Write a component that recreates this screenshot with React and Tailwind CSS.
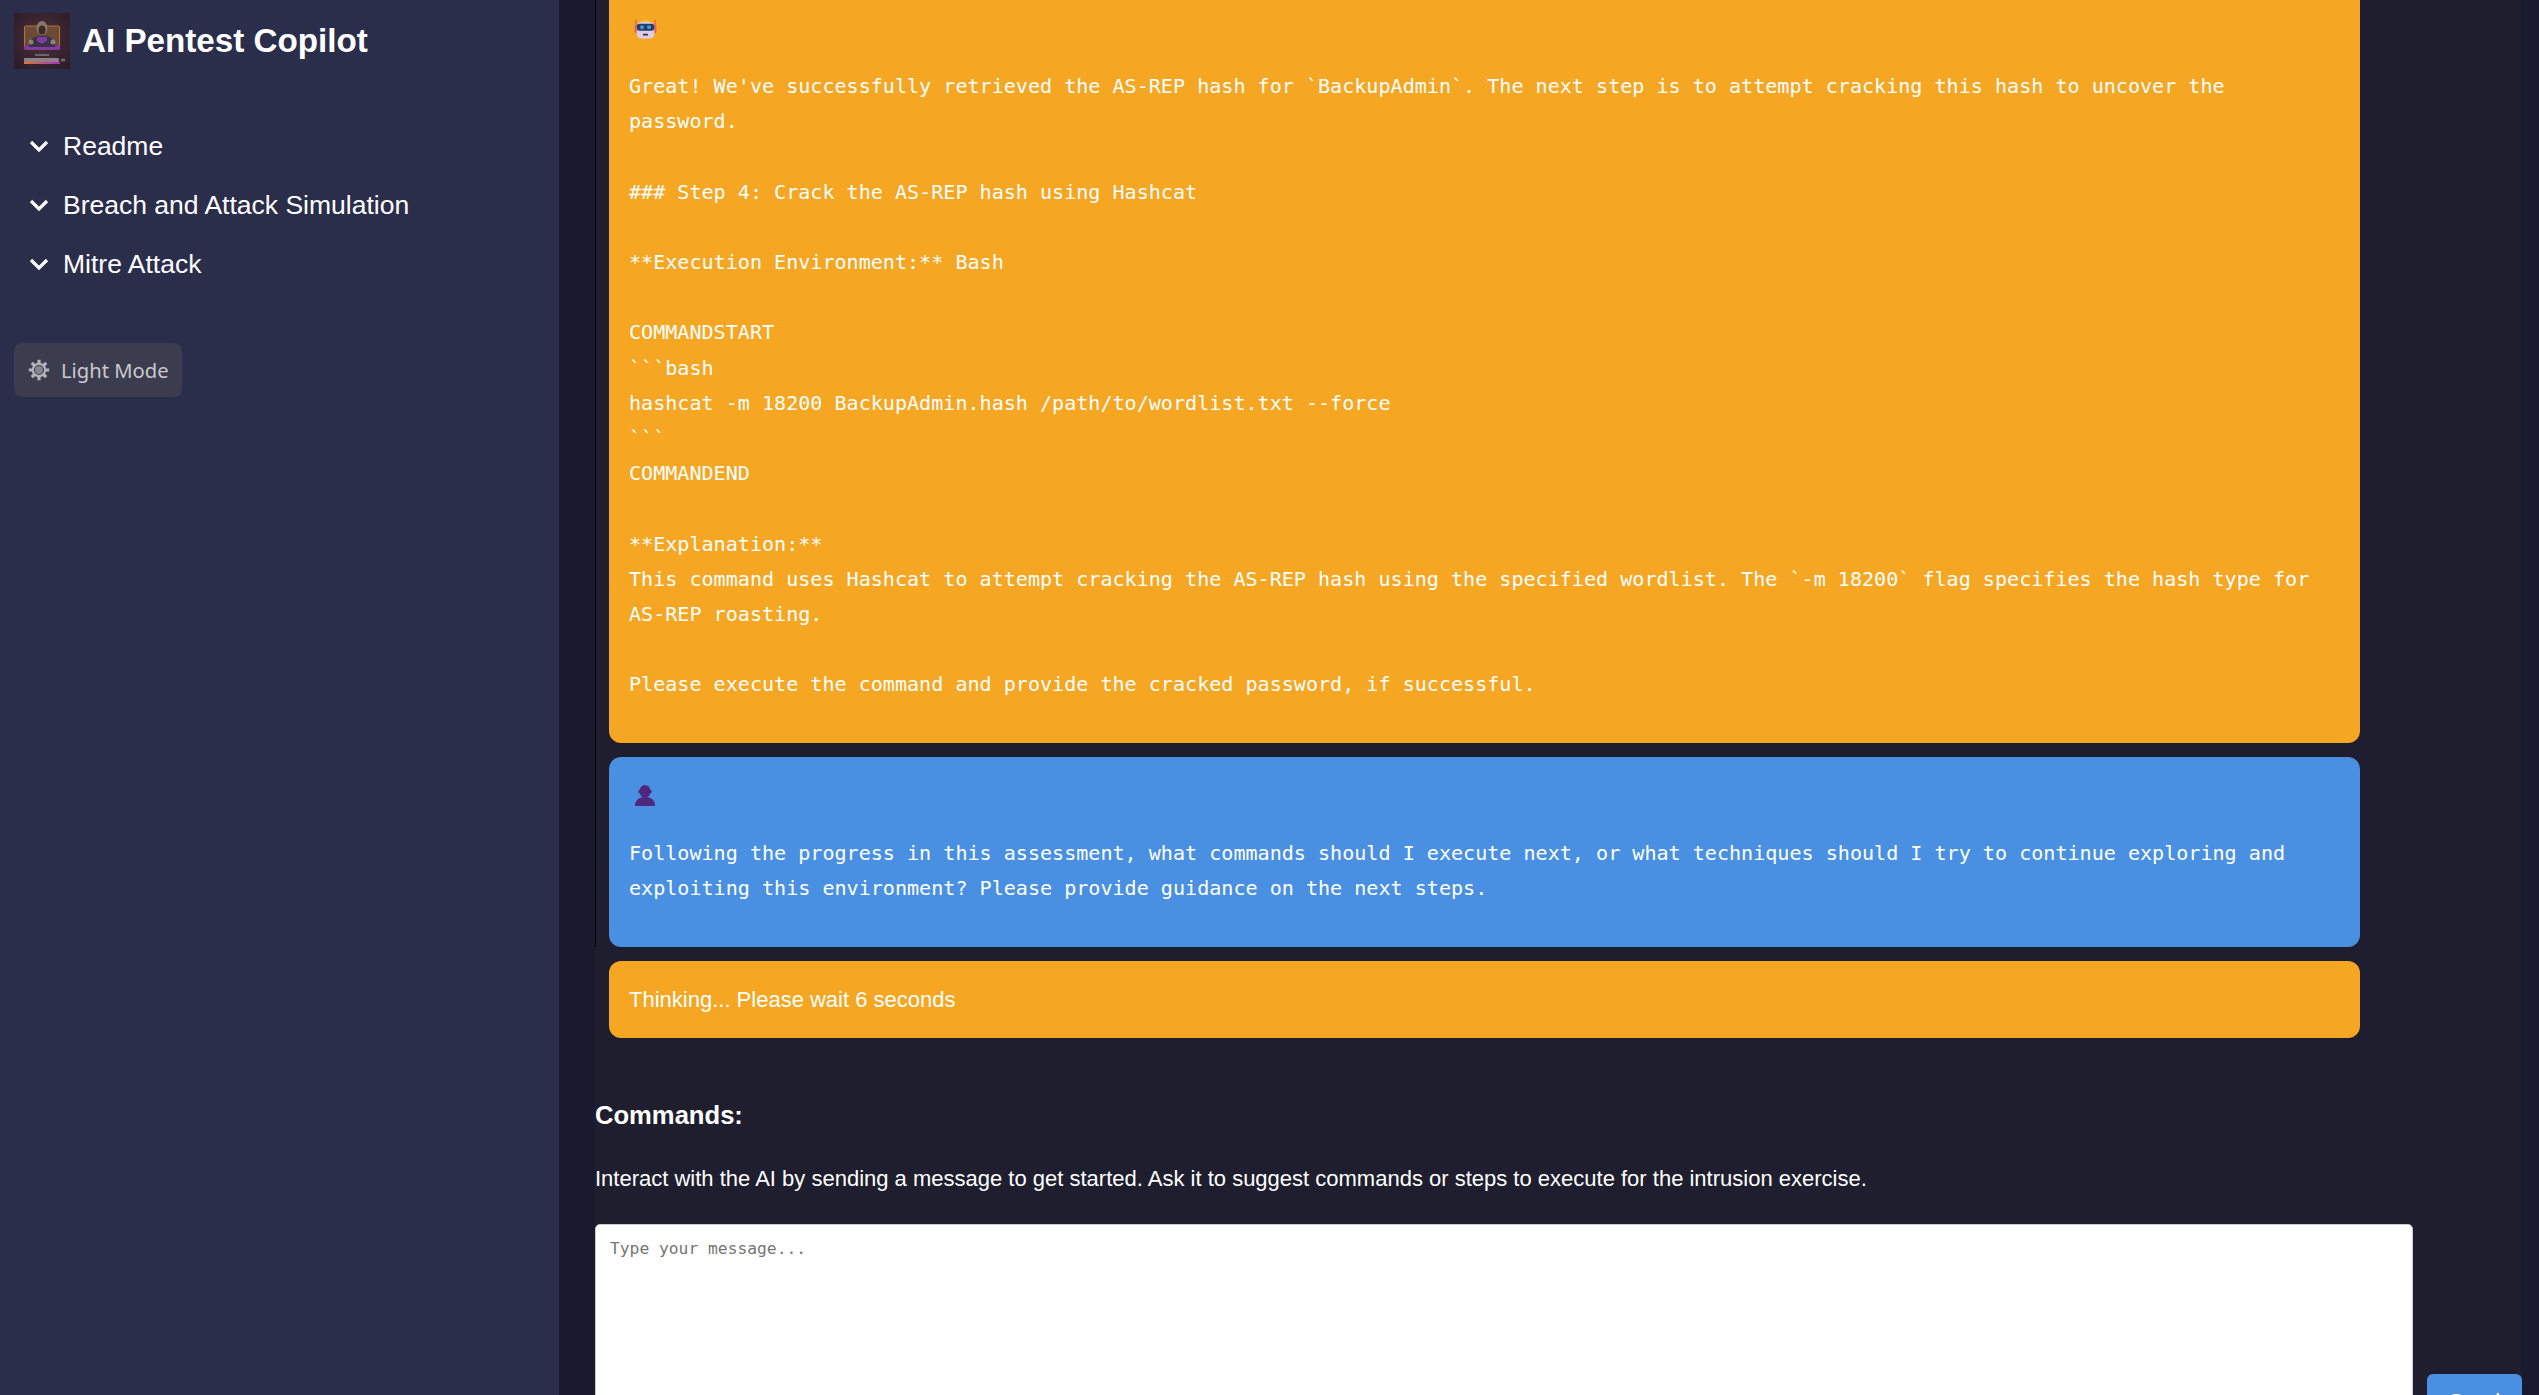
const MONO = "font-['DejaVu_Sans_Mono',monospace]";

const botText = `Great! We've successfully retrieved the AS-REP hash for \`BackupAdmin\`. The next step is to attempt cracking this hash to uncover the
password.

### Step 4: Crack the AS-REP hash using Hashcat

**Execution Environment:** Bash

COMMANDSTART
\`\`\`bash
hashcat -m 18200 BackupAdmin.hash /path/to/wordlist.txt --force
\`\`\`
COMMANDEND

**Explanation:**
This command uses Hashcat to attempt cracking the AS-REP hash using the specified wordlist. The \`-m 18200\` flag specifies the hash type for
AS-REP roasting.

Please execute the command and provide the cracked password, if successful.`;

const userText = `Following the progress in this assessment, what commands should I execute next, or what techniques should I try to continue exploring and
exploiting this environment? Please provide guidance on the next steps.`;

function Logo() {
  return (
    <svg width="56" height="56" viewBox="0 0 56 56" className="shrink-0">
      <defs>
        <linearGradient id="kb" x1="0" x2="1">
          <stop offset="0" stopColor="#e07a1e" />
          <stop offset="1" stopColor="#a02fd0" />
        </linearGradient>
        <radialGradient id="bgl" cx="0.5" cy="0.45" r="0.7">
          <stop offset="0" stopColor="#4a3038" />
          <stop offset="1" stopColor="#2c1c2a" />
        </radialGradient>
      </defs>
      <rect width="56" height="56" fill="url(#bgl)" />
      <rect x="10.5" y="13" width="35" height="23" rx="1" fill="#6b4a36" stroke="#b5732f" strokeWidth="1" />
      <path d="M10 33h36v3.5H10z" fill="#8a35b8" />
      <ellipse cx="28" cy="15" rx="5.5" ry="7" fill="#8d7668" />
      <ellipse cx="28" cy="17" rx="3.5" ry="4.5" fill="#3b2a2a" />
      <path d="M15 34c0-7 4-10 9-11h8c5 1 9 4 9 11z" fill="#3c3240" />
      <path d="M23 24h10v4l-5 3-5-3z" fill="#7b3aa8" />
      <circle cx="17" cy="29" r="2.5" fill="#8a8088" />
      <circle cx="39" cy="29" r="2.5" fill="#8a8088" />
      <rect x="25" y="37" width="6" height="4" fill="#3a3036" />
      <rect x="21" y="41" width="14" height="2" fill="#6e6468" />
      <rect x="10" y="45" width="35" height="4" rx="1" fill="#8d8288" />
      <rect x="10" y="49" width="36" height="2" fill="url(#kb)" />
      <ellipse cx="49" cy="47" rx="2.5" ry="1.5" fill="#77686c" />
    </svg>
  );
}

function Chevron() {
  return (
    <svg width="20" height="20" viewBox="0 0 20 20" fill="none" stroke="#fff" strokeWidth="3.2" className="shrink-0">
      <path d="M2 5l8 8 8-8" />
    </svg>
  );
}

function Gear() {
  return (
    <svg width="22" height="22" viewBox="0 0 22 22" className="shrink-0">
      <g stroke="#b4b4b8" strokeWidth="3.2" strokeLinecap="butt">
        <path d="M11 0.8v4M11 17.2v4M0.8 11h4M17.2 11h4M3.8 3.8l2.8 2.8M15.4 15.4l2.8 2.8M3.8 18.2l2.8-2.8M15.4 6.6l2.8-2.8" />
      </g>
      <circle cx="11" cy="11" r="6.2" fill="none" stroke="#b4b4b8" strokeWidth="2.2" />
      <circle cx="11" cy="11" r="4" fill="#84848c" />
    </svg>
  );
}

function Robot() {
  return (
    <svg width="23" height="21" viewBox="0 0 26 24" className="ml-[5px]">
      <path d="M7 5c1-3.6 11-3.6 12 0z" fill="#f0c330" />
      <path d="M2 2v12M24 2v12" stroke="#ee5b52" strokeWidth="1.4" />
      <rect x="0.6" y="8" width="2.8" height="9" rx="1.2" fill="#ee5b52" />
      <rect x="22.6" y="8" width="2.8" height="9" rx="1.2" fill="#ee5b52" />
      <rect x="3" y="4.5" width="20" height="19" rx="5.5" fill="#d9cdea" />
      <rect x="3" y="6.5" width="20" height="8" rx="3" fill="#2b3a63" />
      <rect x="7" y="8.5" width="4" height="4" rx="1" fill="#2ea3e8" />
      <rect x="15" y="8.5" width="4" height="4" rx="1" fill="#2ea3e8" />
      <rect x="10" y="18" width="6" height="2" rx="1" fill="#3a2f4a" />
    </svg>
  );
}

function Person() {
  return (
    <svg width="22" height="23" viewBox="0 0 24 24" fill="#50267f" className="ml-[5px]">
      <ellipse cx="12" cy="7.5" rx="6" ry="7" />
      <rect x="4.6" y="6" width="14.8" height="3.5" rx="1.7" />
      <path d="M1 23.5c0-5.5 4-8.5 7.5-9.5h7c4 1 7.5 4 7.5 9.5z" />
    </svg>
  );
}

export default function App() {
  return (
    <div className="flex h-screen w-full overflow-hidden bg-[#1a1a2e] font-['Liberation_Sans',Arial,sans-serif] text-white">
      <aside className="w-[559px] shrink-0 bg-[#2b2e4b]">
        <div className="ml-[14px] mt-[13px] flex items-center gap-[12px]">
          <Logo />
          <h1 className="text-[33.2px] font-bold leading-[56px]">AI Pentest Copilot</h1>
        </div>
        <nav className="mt-[49px] flex flex-col">
          {[["Readme", "h-[58px]"], ["Breach and Attack Simulation", "h-[59px]"], ["Mitre Attack", "h-[59px]"]].map(([t, h]) => (
            <div key={t} className={`flex items-center gap-[14px] pl-[29px] text-[26.5px] ${h}`}>
              <Chevron />
              <span>{t}</span>
            </div>
          ))}
        </nav>
        <button className="ml-[14px] mt-[49px] flex h-[54px] w-[168px] items-center gap-[11px] rounded-[8px] bg-[#3b3c4e] pl-[14px] font-['Noto_Sans',sans-serif] text-[20.2px] text-[#c9c9cd]">
          <Gear />
          <span>Light Mode</span>
        </button>
      </aside>

      <main className="ml-[36px] flex w-[1926px] shrink-0 flex-col bg-[#1e1e2e]">
        <div className="h-[947px] shrink-0 border-l border-black pl-[13px]">
          <div className={`h-[743px] w-[1751px] rounded-b-[12px] bg-[#f5a623] pl-[20px] pt-[18px] ${MONO} text-[20.08px] leading-[35.2px]`}>
            <div className="h-[24px]"><Robot /></div>
            <div className="mt-[27px] whitespace-pre">{botText}</div>
          </div>
          <div className={`mt-[14px] h-[190px] w-[1751px] rounded-[12px] bg-[#4a90e2] pl-[20px] pt-[27px] ${MONO} text-[20.08px] leading-[35.2px]`}>
            <div className="h-[24px]"><Person /></div>
            <div className="mt-[28px] whitespace-pre">{userText}</div>
          </div>
        </div>
        <div className="ml-[14px] mt-[14px] flex h-[77px] w-[1751px] shrink-0 items-center rounded-[12px] bg-[#f5a623] pl-[20px] text-[22px]">
          Thinking... Please wait 6 seconds
        </div>
        <h2 className="mt-[61px] shrink-0 text-[25.6px] font-bold leading-[32px]">Commands:</h2>
        <p className="mt-[35px] shrink-0 text-[22px] leading-[26px]">
          Interact with the AI by sending a message to get started. Ask it to suggest commands or steps to execute for the intrusion exercise.
        </p>
        <div className="mt-[32px] flex shrink-0 gap-[14px]">
          <div className={`h-[240px] w-[1818px] shrink-0 rounded-[5px] border border-[#cccccc] bg-white pl-[14px] pt-[14px] ${MONO} text-[16.3px] leading-[20px] text-[#757575]`}>
            Type your message...
          </div>
          <button className="mt-[150px] flex h-[90px] w-[95px] shrink-0 justify-center rounded-[6px] bg-[#4a90e2] pt-[15px] text-[22px] leading-[26px]">
            <span className="block">Send</span>
          </button>
        </div>
      </main>
    </div>
  );
}
